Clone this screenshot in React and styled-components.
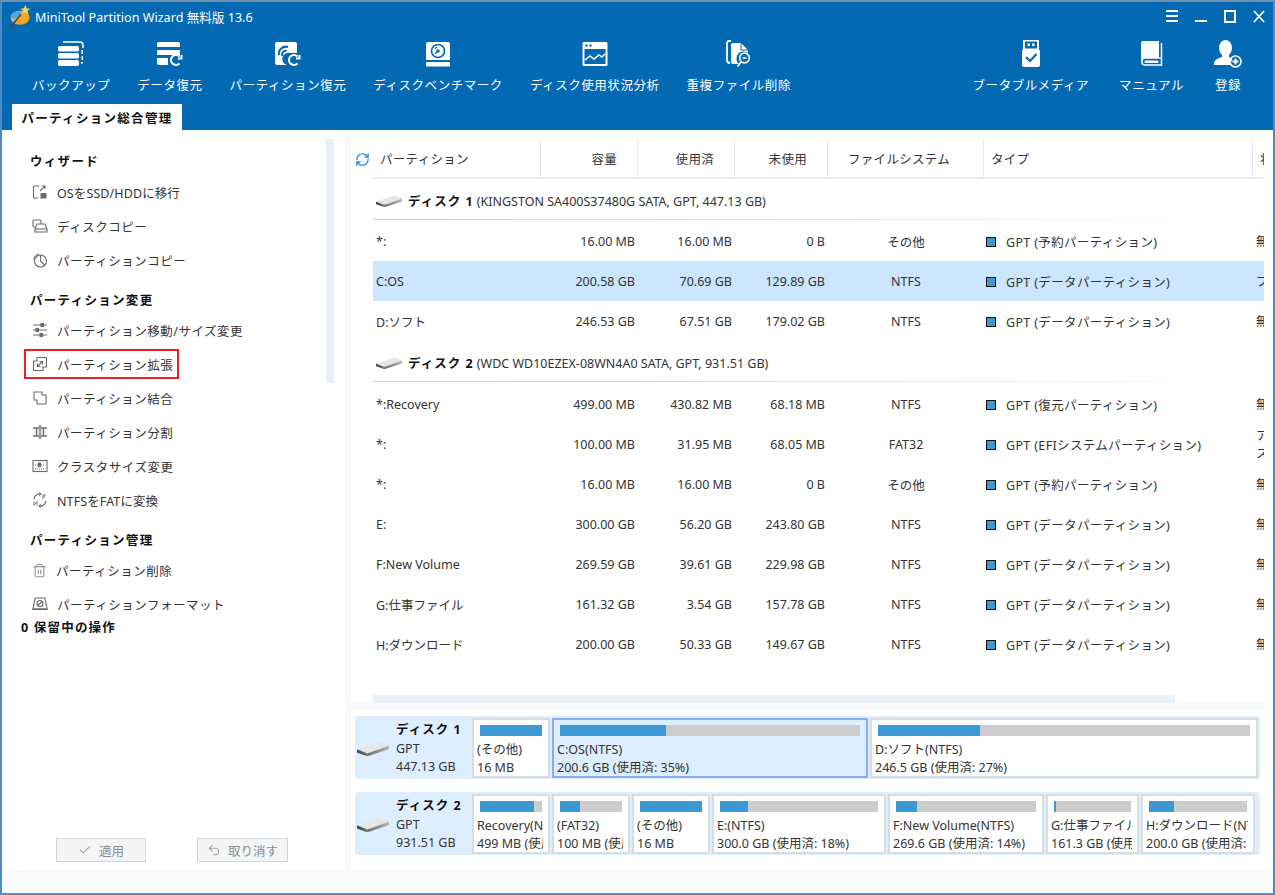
import React from "react";
import styled, { createGlobalStyle } from "styled-components";
import { Check, Undo2, Trash2, RefreshCw } from "lucide-react";

const BLUE = "#0369b3";
const FONT = `"Noto Sans", "Noto Sans CJK JP", sans-serif`;

const GlobalStyle = createGlobalStyle`
  html, body {
    margin: 0;
    padding: 0;
    background: #fff;
  }
  * {
    box-sizing: border-box;
  }
`;

/* ---------- icons ---------- */

const LogoIcon = () => (
  <svg width="26" height="26" viewBox="0 0 30 30">
    <ellipse cx="14" cy="17" rx="11" ry="8" fill="#f5a623" />
    <path d="M3 17c0-5 5-8 11-8 1 3-1 6-5 8-2 1-4 1-6 0z" fill="#4aa8e8" />
    <path d="M4 19c3 1 5 0 7-1-1 3-3 5-5 4-1 0-2-2-2-3z" fill="#7cc6f2" />
    <path d="M2 29L15 13" stroke="#5a4a3a" strokeWidth="2" />
    <path d="M20 2l1.5 4 4 .5-3 2.6 1 4-3.5-2.2-3.5 2.2 1-4-3-2.6 4-.5z" fill="#f7d64a" />
  </svg>
);

const BackupIcon = () => (
  <svg width="26" height="26" viewBox="0 0 26 26" fill="#fff">
    <rect x="0" y="5" width="21" height="5.5" rx="1.5" />
    <rect x="0" y="12" width="21" height="5.5" rx="1.5" />
    <rect x="0" y="19" width="21" height="6" rx="1.5" />
    <path d="M5 1h17a3 3 0 0 1 3 3v3" stroke="#fff" strokeWidth="1.5" fill="none" />
    <rect x="23.5" y="9" width="1.5" height="4" />
    <rect x="23.5" y="15" width="1.5" height="4" />
    <path d="M23 21h2c0 1-1 2-2 2z" />
  </svg>
);

const RecoverArrow = ({ x, y }) => (
  <path
    d={`M${x + 9.5} ${y + 2.5}a5 5 0 1 0 0 7M${x + 8} ${y + 4.5}h3.5v-3.5`}
    stroke="#fff"
    strokeWidth="2"
    fill="none"
  />
);

const DataRecoverIcon = () => (
  <svg width="26" height="26" viewBox="0 0 26 26" fill="#fff">
    <path d="M2 1h19a2 2 0 0 1 2 2v3H0V3a2 2 0 0 1 2-2z" />
    <rect x="0" y="9" width="23" height="5" />
    <path d="M0 17h11v7H2a2 2 0 0 1-2-2z" />
    <RecoverArrow x={13} y={13} />
  </svg>
);

const PartRecoverIcon = () => (
  <svg width="26" height="26" viewBox="0 0 26 26">
    <path
      d="M2 1h18a2 2 0 0 1 2 2v9h-7a4 4 0 0 0-3 12H2a2 2 0 0 1-2-2V3a2 2 0 0 1 2-2z"
      fill="#fff"
    />
    <path d="M4 14a7 7 0 0 1 9-8" stroke={BLUE} strokeWidth="2" fill="none" />
    <path d="M7.5 15a3.5 3.5 0 0 1 4-5" stroke={BLUE} strokeWidth="2" fill="none" />
    <RecoverArrow x={13} y={13} />
  </svg>
);

const BenchIcon = () => (
  <svg width="24" height="26" viewBox="0 0 24 26">
    <path d="M2 1h20a2 2 0 0 1 2 2v16H0V3a2 2 0 0 1 2-2z" fill="#fff" />
    <rect x="0" y="21" width="24" height="4.5" rx="1" fill="#fff" />
    <circle cx="12" cy="10" r="6.5" fill="none" stroke={BLUE} strokeWidth="1.6" />
    <circle cx="12" cy="10" r="1.8" fill={BLUE} />
    <path d="M9 8a4 4 0 0 1 2-2M9 13l2-2" stroke={BLUE} strokeWidth="1.2" />
  </svg>
);

const UsageIcon = () => (
  <svg width="26" height="26" viewBox="0 0 26 26">
    <rect x="0.5" y="1" width="25" height="24" rx="1.5" fill="#fff" />
    <rect x="2.5" y="8" width="21" height="15" fill={BLUE} />
    <circle cx="4.5" cy="4.5" r="1.2" fill={BLUE} />
    <circle cx="8.5" cy="4.5" r="1.2" fill={BLUE} />
    <path d="M3 19l5-4 4 3 5-4 3 2 3-3" stroke="#fff" strokeWidth="1.5" fill="none" />
  </svg>
);

const DupIcon = () => (
  <svg width="26" height="28" viewBox="0 0 26 28">
    <path d="M5 1H3a2 2 0 0 0-2 2v17a3 3 0 0 0 3 3" stroke="#fff" strokeWidth="1.8" fill="none" />
    <path
      d="M7 3h8l7 7v3a7 7 0 0 0-9 11H7a2 2 0 0 1-2-2V5a2 2 0 0 1 2-2z"
      fill="#fff"
    />
    <path d="M15 3v7h7" stroke={BLUE} strokeWidth="1" fill="none" />
    <circle cx="18.5" cy="18" r="4.8" fill="none" stroke="#fff" strokeWidth="1.7" />
    <path d="M16.5 18h4" stroke="#fff" strokeWidth="1.5" />
    <path d="M15 22l-3.5 4.5" stroke="#fff" strokeWidth="1.7" />
  </svg>
);

const UsbIcon = () => (
  <svg width="20" height="28" viewBox="0 0 20 28">
    <path d="M3 0.5h14v9H3z" fill="none" stroke="#fff" strokeWidth="2" />
    <rect x="6.5" y="3.5" width="2.5" height="2.5" fill="#fff" />
    <rect x="11" y="3.5" width="2.5" height="2.5" fill="#fff" />
    <path d="M1 10h18v15a2 2 0 0 1-2 2H3a2 2 0 0 1-2-2z" fill="#fff" />
    <path d="M5 17l4 4 6.5-7" stroke={BLUE} strokeWidth="2.2" fill="none" />
  </svg>
);

const BookIcon = () => (
  <svg width="24" height="28" viewBox="0 0 24 28">
    <path d="M1 3a2 2 0 0 1 2-2h16v17H6a5 5 0 0 0-5 5z" fill="#fff" />
    <path d="M21.5 3v22H5a3 3 0 0 1-3-3v-1a3 3 0 0 1 3-3h16" stroke="#fff" strokeWidth="1.5" fill="none" />
    <rect x="4.5" y="20.5" width="14" height="2.5" rx="1" fill="#fff" />
  </svg>
);

const UserIcon = () => (
  <svg width="28" height="28" viewBox="0 0 28 28">
    <ellipse cx="11.5" cy="8" rx="6.5" ry="8" fill="#fff" />
    <path d="M8 15h7v2c2 1 3 2 3.5 3a7 7 0 0 0-2.5 5H0v-1c0-4 4-6 8-7z" fill="#fff" />
    <circle cx="21.5" cy="21.5" r="5.5" fill="none" stroke="#fff" strokeWidth="1.6" />
    <path d="M21.5 18.5v6M18.5 21.5h6" stroke="#fff" strokeWidth="2" />
  </svg>
);

const SmallIcon = ({ children }) => (
  <svg
    width="16"
    height="16"
    viewBox="0 0 16 16"
    fill="none"
    stroke="#6b6b6b"
    strokeWidth="1.1"
  >
    {children}
  </svg>
);

const MigrateIcon = () => (
  <SmallIcon>
    <path d="M7 2H2.5a1 1 0 0 0-1 1v10a1 1 0 0 0 1 1H6" />
    <path d="M8 7l5-5M10 2h3v3" />
    <rect x="8.5" y="9" width="6" height="5.5" fill="#6b6b6b" stroke="none" />
  </SmallIcon>
);
const DiskCopyIcon = () => (
  <SmallIcon>
    <rect x="1" y="2" width="8" height="7" rx="1" />
    <path d="M5 6h8l2 5v3H3v-3z" fill="#fff" />
    <path d="M3 11h12" />
  </SmallIcon>
);
const PartCopyIcon = () => (
  <SmallIcon>
    <circle cx="8.5" cy="9" r="6" />
    <path d="M8.5 9V3M8.5 9l4 4" />
    <path d="M2 8a6 6 0 0 1 5-6" />
  </SmallIcon>
);
const SlidersIcon = () => (
  <SmallIcon>
    <path d="M1 3h14M1 8h14M1 13h14" />
    <rect x="9" y="1.5" width="2.5" height="3" fill="#6b6b6b" />
    <rect x="4" y="6.5" width="2.5" height="3" fill="#6b6b6b" />
    <rect x="8" y="11.5" width="2.5" height="3" fill="#6b6b6b" />
  </SmallIcon>
);
const ExtendIcon = () => (
  <SmallIcon>
    <path d="M5 1.5h9.5V11H11v3.5H1.5V5H5z" />
    <path d="M5.5 10.5l5-5M7.5 5.5h3v3M5.5 7.5v3h3" />
  </SmallIcon>
);
const MergeIcon = () => (
  <SmallIcon>
    <path d="M2 2h8v3h4v9H5v-4H2z" />
  </SmallIcon>
);
const SplitIcon = () => (
  <SmallIcon>
    <path d="M1 4h6M9 4h6M1 12h6M9 12h6" strokeWidth="1.5" />
    <path d="M8 1v14" strokeWidth="2.5" stroke="#999" />
    <path d="M4.5 4v8M11.5 4v8" strokeWidth="1.5" />
  </SmallIcon>
);
const ClusterIcon = () => (
  <SmallIcon>
    <rect x="1" y="2.5" width="14" height="11" />
    <path d="M3 7h10M3 11h10" strokeDasharray="1 1" />
    <rect x="6.5" y="5" width="2" height="3.5" fill="#6b6b6b" />
  </SmallIcon>
);
const ConvertIcon = () => (
  <SmallIcon>
    <path d="M2 7a5.5 5.5 0 0 1 6-5M14 9a5.5 5.5 0 0 1-6 5" />
    <path d="M7 0.5l2 1.5-2 1.5M9 12.5l-2 1.5 2 1.5" />
    <path d="M11 3h3M11 3v4M11 5h2M2 9.5v4l3-4v4" strokeWidth="0.9" />
  </SmallIcon>
);
const FormatIcon = () => (
  <SmallIcon>
    <path d="M3 2h10l2 11H1z" />
    <path d="M1 13h14v1.5H1z" fill="#6b6b6b" />
    <circle cx="8" cy="7.5" r="3" />
    <path d="M6 9.5l4-4" />
  </SmallIcon>
);

const DeleteIcon = () => <Trash2 size={15} color="#6b6b6b" strokeWidth={1.3} />;

const DiskDrive = ({ $w = 26 }) => (
  <svg width={$w} height={$w * 0.5} viewBox="0 0 32 16">
    <defs>
      <linearGradient id="driveFront" x1="0" x2="1" y1="0" y2="0">
        <stop offset="0" stopColor="#444" />
        <stop offset="0.4" stopColor="#777" />
        <stop offset="1" stopColor="#b5b5b5" />
      </linearGradient>
    </defs>
    <path d="M0.5 9.5L20 2.5c2-.7 3-.7 5 0l6 2c1 .5 1 1 0 1.5L13 12.5c-2 .7-3 .7-5 0z" fill="#e6e6e6" />
    <path d="M0.5 9.5L8 12.5c2 .7 3 .7 5 0l18-6.5c.6-.3 1-.5 1-.8v3.300c0 .6-.4.9-1 1.100L13 15.5c-2 .7-3 .7-5 0l-7-2.5c-.6-.3-1-.6-1-1.100v-2z" fill="url(#driveFront)" />
    <rect x="9" y="13" width="2" height="1.5" fill="#54c47a" />
  </svg>
);

/* ---------- window / title bar ---------- */

const Window = styled.div`
  width: 1275px;
  height: 895px;
  display: flex;
  flex-direction: column;
  overflow: hidden;
  border: 2px solid #4b8bc6;
  border-top-color: #6f8fae;
  border-bottom-color: #5b8cba;
  background: #fff;
  font-family: ${FONT};
  font-size: 12.5px;
  color: #333;
`;

const Header = styled.header`
  height: 128px;
  flex: none;
  display: flex;
  flex-direction: column;
  background: ${BLUE};
  color: #fff;
`;

const TitleRow = styled.div`
  height: 28px;
  display: flex;
  align-items: center;
  padding: 0 8px 0 6px;
`;

const AppTitle = styled.span`
  margin-left: 1px;
  font-size: 12.6px;
  flex: 1;
`;

const WinButtons = styled.div`
  display: flex;
  align-items: center;
  gap: 17px;
`;

const Toolbar = styled.div`
  display: flex;
  height: 74px;
  justify-content: space-between;
  padding: 9px 31px 0 30px;
`;

const ToolGroup = styled.div`
  display: flex;
  gap: ${(p) => p.$gap}px;
`;

const ToolItem = styled.div`
  display: flex;
  flex-direction: column;
  align-items: center;
  white-space: nowrap;
`;

const ToolIcon = styled.div`
  height: 30px;
  display: flex;
  align-items: center;
  justify-content: center;
`;

const ToolLabel = styled.span`
  margin-top: 8px;
  line-height: 18px;
  font-size: 12.5px;
  letter-spacing: 0.55px;
`;

const TabRow = styled.div`
  flex: 1;
  display: flex;
  align-items: flex-end;
  padding-left: 10px;
`;

const Tab = styled.div`
  width: 170px;
  height: 26px;
  background: #fff;
  color: #111;
  font-weight: 700;
  font-size: 12.5px;
  letter-spacing: 1.3px;
  display: flex;
  align-items: center;
  justify-content: center;
`;

/* ---------- sidebar ---------- */

const Body = styled.div`
  flex: 1;
  display: flex;
  min-height: 0;
`;

const Sidebar = styled.aside`
  width: 343px;
  flex: none;
  display: flex;
  flex-direction: column;
`;

const SidebarScroll = styled.div`
  height: 480px;
  flex: none;
  display: flex;
  overflow: hidden;
`;

const SideList = styled.div`
  flex: 1;
  padding: 22px 0 0 22px;
`;

const SideHeading = styled.div`
  font-weight: 700;
  color: #111;
  padding-left: 6px;
  line-height: 20px;
  letter-spacing: 1.3px;
  margin-top: ${(p) => p.$top || 0}px;
  margin-bottom: ${(p) => p.$bottom}px;
`;

const SideItem = styled.div`
  display: flex;
  align-items: center;
  gap: 9px;
  height: ${(p) => (p.$selected ? 30 : 34)}px;
  margin: ${(p) => (p.$selected ? "2px 0" : "0")};
  width: ${(p) => (p.$selected ? "155px" : "auto")};
  padding-left: 6px;
  border: 2px solid ${(p) => (p.$selected ? "#e8202a" : "transparent")};
  color: #333;
  white-space: nowrap;
  letter-spacing: ${(p) => (p.$latin ? 0.1 : 0.5)}px;
`;

const SideThumb = styled.div`
  width: 8px;
  height: 244px;
  margin: 9px 11px 0 0;
  flex: none;
  background: #e8f0f8;
`;

const Pending = styled.div`
  padding-left: 19px;
  margin-top: 8px;
  font-weight: 700;
  color: #111;
  line-height: 20px;
  letter-spacing: 1.2px;
`;

const SideActions = styled.div`
  margin-top: auto;
  margin-bottom: 9px;
  display: flex;
  gap: 51px;
  padding-left: 54px;
`;

const ActionButton = styled.button`
  width: ${(p) => p.$w}px;
  height: 24px;
  display: flex;
  align-items: center;
  justify-content: center;
  gap: 7px;
  padding: 0;
  border: 1px solid #d2d5d8;
  background: #f3f5f7;
  color: #8c8c8c;
  font-family: inherit;
  font-size: 12.5px;
`;

/* ---------- main panel ---------- */

const Main = styled.main`
  flex: 1;
  min-width: 0;
  display: flex;
  flex-direction: column;
  border-left: 6px solid #f8f9fa;
  padding-top: 9px;
`;

const TableWrap = styled.div`
  display: flex;
  height: 556px;
  flex: none;
`;

const RefreshCell = styled.div`
  width: 22px;
  flex: none;
  padding: 13px 0 0 4px;
`;

const Table = styled.div`
  width: 891px;
  flex: none;
  overflow: hidden;
`;

const COLUMNS = "168px 97px 97px 93px 156px 269px 11px";

const HeaderRow = styled.div`
  display: grid;
  grid-template-columns: ${COLUMNS};
  height: 40px;
  border-bottom: 2px solid #ebedef;
`;

const HeaderCell = styled.div`
  display: flex;
  align-items: center;
  justify-content: ${(p) => (p.$align === "right" ? "flex-end" : "flex-start")};
  padding: ${(p) =>
    p.$align === "right" ? "0 20px 0 0" : p.$align === "center" ? "0 0 0 20px" : "0 0 0 7px"};
  border-right: 1px solid #e6e8ea;
  white-space: nowrap;
  overflow: hidden;
  letter-spacing: 0.3px;
  &:last-child {
    border-right: 0;
  }
`;

const DiskHeader = styled.div`
  height: 41px;
  margin-bottom: ${(p) => p.$after}px;
  display: flex;
  align-items: center;
  gap: 6px;
  padding: 2px 0 0 3px;
  background: linear-gradient(to right, #cfcfcf, #ececec 70%, #fff 93%) left bottom / 100% 1px no-repeat;
  white-space: nowrap;
`;

const DiskName = styled.b`
  color: #111;
  letter-spacing: 1px;
  font-size: 12.5px;
`;

const DiskLabelName = styled(DiskName)`
  display: block;
  margin-bottom: 1px;
`;

const Row = styled.div`
  display: grid;
  grid-template-columns: ${COLUMNS};
  height: 40px;
  align-items: center;
  padding-top: 1px;
  background: ${(p) => (p.$selected ? "#cbe6fe" : "transparent")};
`;

const Cell = styled.div`
  white-space: nowrap;
  text-align: ${(p) => p.$align || "left"};
  padding: ${(p) => (p.$align === "right" ? "0 3px 0 0" : p.$align === "center" ? "0" : "0 0 0 3px")};
`;

const TypeCell = styled.div`
  display: flex;
  align-items: center;
  gap: 10px;
  padding-left: 2px;
  white-space: nowrap;
  letter-spacing: 0.35px;
`;

const TypeSwatch = styled.span`
  width: 10px;
  height: 10px;
  flex: none;
  background: #3d98d3;
  border: 1px solid #111;
`;

const StatusCell = styled.div`
  overflow: hidden;
  white-space: pre;
  padding-left: 3px;
  line-height: 18px;
`;

const HScrollThumb = styled.div`
  width: 802px;
  height: 8px;
  margin-left: 22px;
  flex: none;
  background: #e8f0f8;
`;

const ScrollGap = styled.div`
  height: 7px;
  flex: none;
  width: 913px;
  background: #f8f9fa;
`;

/* ---------- disk map ---------- */

const DiskMap = styled.div`
  padding: 6px 0 0 4px;
  display: flex;
  flex-direction: column;
  gap: 13px;
`;

const DiskStrip = styled.div`
  height: 63px;
  width: ${(p) => p.$w}px;
  display: flex;
  align-items: center;
  background: #ddeeff;
  border-radius: 3px;
  padding-right: 2px;
`;

const DiskLabel = styled.div`
  width: 117px;
  flex: none;
  display: flex;
  align-items: center;
  gap: 7px;
  padding-left: 2px;
`;

const DiskLabelText = styled.div`
  line-height: 18px;
  padding-top: 1px;
  white-space: nowrap;
`;

const PartRow = styled.div`
  display: flex;
  gap: 2px;
`;

const PartBox = styled.div`
  width: ${(p) => p.$w}px;
  height: 60px;
  flex: none;
  overflow: hidden;
  background: ${(p) => (p.$selected ? "#ddeeff" : "#fff")};
  border: 2px solid ${(p) => (p.$selected ? "#8aaaf5" : "#d9dde1")};
  padding: 5px 5px 0 3px;
`;

const Bar = styled.div`
  height: 11px;
  margin: 0 1px 5px 3px;
  background: #cccccc;
`;

const BarFill = styled.div`
  height: 100%;
  background: #3d98d3;
`;

const PartText = styled.div`
  line-height: 18px;
  white-space: nowrap;
  overflow: hidden;
`;

const BottomStrip = styled.div`
  height: 22px;
  flex: none;
  background: #f8f9fa;
`;

/* ---------- data ---------- */

const leftTools = [
  [BackupIcon, "バックアップ"],
  [DataRecoverIcon, "データ復元"],
  [PartRecoverIcon, "パーティション復元"],
  [BenchIcon, "ディスクベンチマーク"],
  [UsageIcon, "ディスク使用状況分析"],
  [DupIcon, "重複ファイル削除"],
];

const rightTools = [
  [UsbIcon, "ブータブルメディア"],
  [BookIcon, "マニュアル"],
  [UserIcon, "登録"],
];

const sections = [
  {
    title: "ウィザード",
    bottom: 3,
    items: [
      [MigrateIcon, "OSをSSD/HDDに移行"],
      [DiskCopyIcon, "ディスクコピー"],
      [PartCopyIcon, "パーティションコピー"],
    ],
  },
  {
    title: "パーティション変更",
    top: 14,
    bottom: 2,
    items: [
      [SlidersIcon, "パーティション移動/サイズ変更"],
      [ExtendIcon, "パーティション拡張", true],
      [MergeIcon, "パーティション結合"],
      [SplitIcon, "パーティション分割"],
      [ClusterIcon, "クラスタサイズ変更"],
      [ConvertIcon, "NTFSをFATに変換"],
    ],
  },
  {
    title: "パーティション管理",
    top: 14,
    bottom: 2,
    items: [
      [DeleteIcon, "パーティション削除"],
      [FormatIcon, "パーティションフォーマット"],
    ],
  },
];

const tableColumns = [
  ["パーティション", "left"],
  ["容量", "right"],
  ["使用済", "right"],
  ["未使用", "right"],
  ["ファイルシステム", "center"],
  ["タイプ", "left"],
  ["状態", "left"],
];

const disk1Rows = [
  ["*:", "16.00 MB", "16.00 MB", "0 B", "その他", "GPT (予約パーティション)", "無し"],
  ["C:OS", "200.58 GB", "70.69 GB", "129.89 GB", "NTFS", "GPT (データパーティション)", "ブート", true],
  ["D:ソフト", "246.53 GB", "67.51 GB", "179.02 GB", "NTFS", "GPT (データパーティション)", "無し"],
];

const disk2Rows = [
  ["*:Recovery", "499.00 MB", "430.82 MB", "68.18 MB", "NTFS", "GPT (復元パーティション)", "無し"],
  ["*:", "100.00 MB", "31.95 MB", "68.05 MB", "FAT32", "GPT (EFIシステムパーティション)", "アクティブ\nス"],
  ["*:", "16.00 MB", "16.00 MB", "0 B", "その他", "GPT (予約パーティション)", "無し"],
  ["E:", "300.00 GB", "56.20 GB", "243.80 GB", "NTFS", "GPT (データパーティション)", "無し"],
  ["F:New Volume", "269.59 GB", "39.61 GB", "229.98 GB", "NTFS", "GPT (データパーティション)", "無し"],
  ["G:仕事ファイル", "161.32 GB", "3.54 GB", "157.78 GB", "NTFS", "GPT (データパーティション)", "無し"],
  ["H:ダウンロード", "200.00 GB", "50.33 GB", "149.67 GB", "NTFS", "GPT (データパーティション)", "無し"],
];

const disk1Parts = [
  { w: 78, used: 100, a: "(その他)", b: "16 MB" },
  { w: 316, used: 35.4, a: "C:OS(NTFS)", b: "200.6 GB (使用済: 35%)", selected: true },
  { w: 388, used: 27.4, a: "D:ソフト(NTFS)", b: "246.5 GB (使用済: 27%)" },
];

const disk2Parts = [
  { w: 78, used: 87, a: "Recovery(NTFS)", b: "499 MB (使用済: 86%)" },
  { w: 78, used: 32, a: "(FAT32)", b: "100 MB (使用済: 31%)" },
  { w: 78, used: 100, a: "(その他)", b: "16 MB" },
  { w: 174, used: 18, a: "E:(NTFS)", b: "300.0 GB (使用済: 18%)" },
  { w: 156, used: 15, a: "F:New Volume(NTFS)", b: "269.6 GB (使用済: 14%)" },
  { w: 93, used: 2.6, a: "G:仕事ファイル(NTFS)", b: "161.3 GB (使用済: 2%)" },
  { w: 114, used: 25, a: "H:ダウンロード(NTFS)", b: "200.0 GB (使用済: 25%)" },
];

/* ---------- pieces ---------- */

const Tool = ({ icon: Icon, label }) => (
  <ToolItem>
    <ToolIcon>
      <Icon />
    </ToolIcon>
    <ToolLabel>{label}</ToolLabel>
  </ToolItem>
);

const TableRow = ({ row }) => {
  const [name, cap, used, free, fs, type, status, selected] = row;
  return (
    <Row $selected={selected}>
      <Cell>{name}</Cell>
      <Cell $align="right">{cap}</Cell>
      <Cell $align="right">{used}</Cell>
      <Cell $align="right">{free}</Cell>
      <Cell $align="center">{fs}</Cell>
      <TypeCell>
        <TypeSwatch />
        <span>{type}</span>
      </TypeCell>
      <StatusCell>{status}</StatusCell>
    </Row>
  );
};

const DiskStripRow = ({ name, size, parts, width }) => (
  <DiskStrip $w={width}>
    <DiskLabel>
      <DiskDrive $w={32} />
      <DiskLabelText>
        <DiskLabelName>{name}</DiskLabelName>
        <div>GPT</div>
        <div>{size}</div>
      </DiskLabelText>
    </DiskLabel>
    <PartRow>
      {parts.map((p, i) => (
        <PartBox key={i} $w={p.w} $selected={p.selected}>
          <Bar>
            <BarFill style={{ width: `${p.used}%` }} />
          </Bar>
          <PartText>{p.a}</PartText>
          <PartText>{p.b}</PartText>
        </PartBox>
      ))}
    </PartRow>
  </DiskStrip>
);

export default function App() {
  return (
    <>
      <GlobalStyle />
      <Window>
        <Header>
          <TitleRow>
            <LogoIcon />
            <AppTitle>MiniTool Partition Wizard 無料版 13.6</AppTitle>
            <WinButtons>
              <svg width="12" height="14" viewBox="0 0 12 14" fill="#fff">
                <rect y="1" width="12" height="2" />
                <rect y="6" width="12" height="2" />
                <rect y="11" width="12" height="2" />
              </svg>
              <svg width="12" height="14" viewBox="0 0 12 14" fill="#fff">
                <rect y="11" width="12" height="2" />
              </svg>
              <svg width="12" height="14" viewBox="0 0 12 14" fill="none" stroke="#fff" strokeWidth="2">
                <rect x="1" y="2" width="10" height="11" />
              </svg>
              <svg width="12" height="14" viewBox="0 0 12 14" fill="none" stroke="#fff" strokeWidth="1.8">
                <path d="M1 2l10 11M11 2L1 13" />
              </svg>
            </WinButtons>
          </TitleRow>
          <Toolbar>
            <ToolGroup $gap={27}>
              {leftTools.map(([icon, label]) => (
                <Tool key={label} icon={icon} label={label} />
              ))}
            </ToolGroup>
            <ToolGroup $gap={30}>
              {rightTools.map(([icon, label]) => (
                <Tool key={label} icon={icon} label={label} />
              ))}
            </ToolGroup>
          </Toolbar>
          <TabRow>
            <Tab>パーティション総合管理</Tab>
          </TabRow>
        </Header>

        <Body>
          <Sidebar>
            <SidebarScroll>
              <SideList>
                {sections.map((s) => (
                  <div key={s.title}>
                    <SideHeading $top={s.top} $bottom={s.bottom}>
                      {s.title}
                    </SideHeading>
                    {s.items.map(([Icon, label, selected]) => (
                      <SideItem key={label} $selected={selected} $latin={/^[A-Z]/.test(label)}>
                        <Icon />
                        <span>{label}</span>
                      </SideItem>
                    ))}
                  </div>
                ))}
              </SideList>
              <SideThumb />
            </SidebarScroll>
            <Pending>0 保留中の操作</Pending>
            <SideActions>
              <ActionButton $w={90}>
                <Check size={14} color="#aaa" />
                適用
              </ActionButton>
              <ActionButton $w={91}>
                <Undo2 size={14} color="#aaa" />
                取り消す
              </ActionButton>
            </SideActions>
          </Sidebar>

          <Main>
            <TableWrap>
              <RefreshCell>
                <RefreshCw size={15} color="#2f8fdc" strokeWidth={2.2} />
              </RefreshCell>
              <Table>
                <HeaderRow>
                  {tableColumns.map(([label, align]) => (
                    <HeaderCell key={label} $align={align}>
                      {label}
                    </HeaderCell>
                  ))}
                </HeaderRow>
                <DiskHeader $after={1}>
                  <DiskDrive />
                  <span>
                    <DiskName>ディスク 1</DiskName> (KINGSTON SA400S37480G SATA, GPT, 447.13 GB)
                  </span>
                </DiskHeader>
                {disk1Rows.map((r, i) => (
                  <TableRow key={i} row={r} />
                ))}
                <DiskHeader $after={2}>
                  <DiskDrive />
                  <span>
                    <DiskName>ディスク 2</DiskName> (WDC WD10EZEX-08WN4A0 SATA, GPT, 931.51 GB)
                  </span>
                </DiskHeader>
                {disk2Rows.map((r, i) => (
                  <TableRow key={i} row={r} />
                ))}
              </Table>
            </TableWrap>
            <HScrollThumb />
            <ScrollGap />
            <DiskMap>
              <DiskStripRow name="ディスク 1" size="447.13 GB" parts={disk1Parts} width={905} />
              <DiskStripRow name="ディスク 2" size="931.51 GB" parts={disk2Parts} width={905} />
            </DiskMap>
          </Main>
        </Body>
        <BottomStrip />
      </Window>
    </>
  );
}
